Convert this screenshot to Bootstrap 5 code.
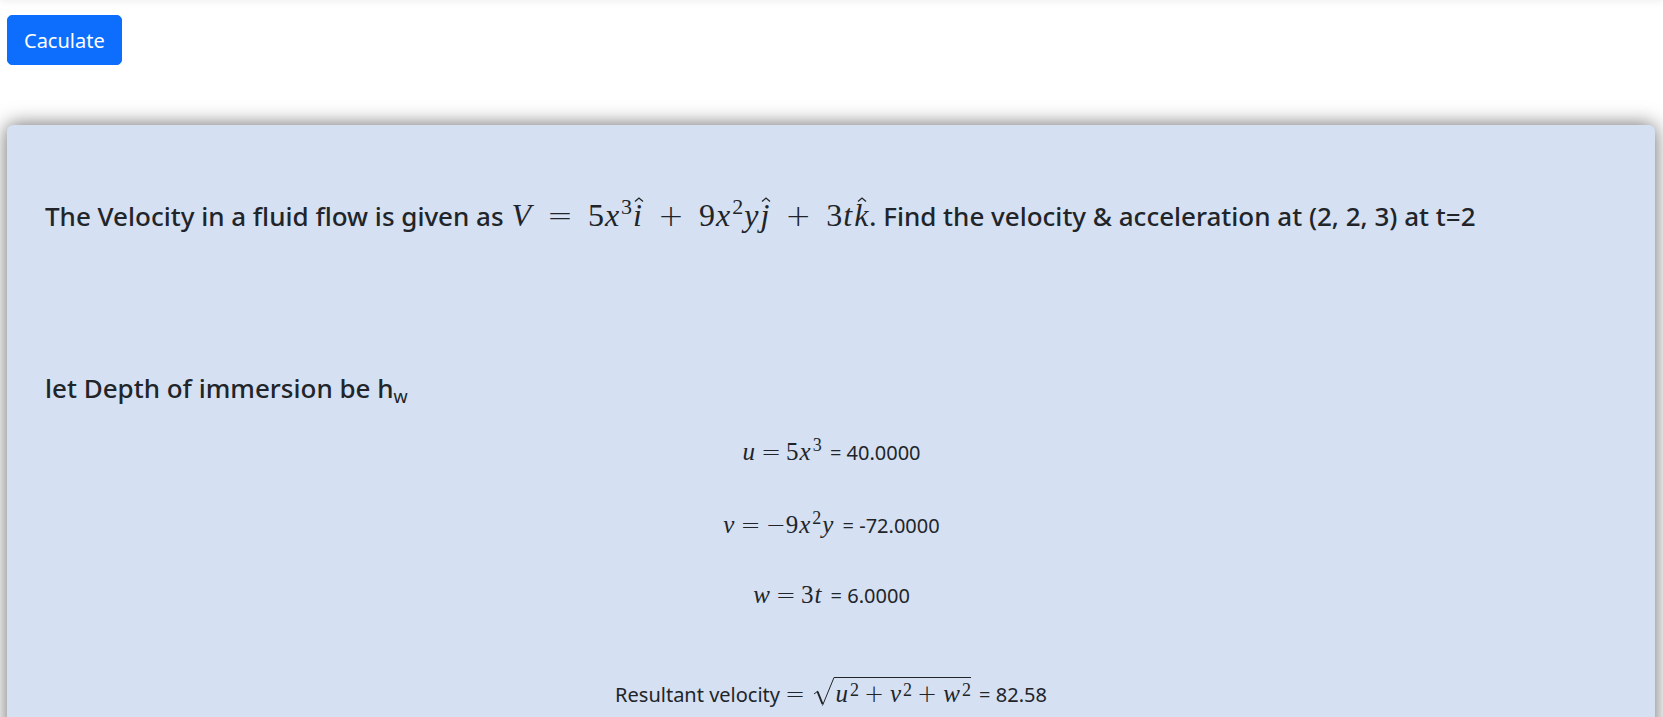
<!DOCTYPE html>
<html lang="en">
<head>
<meta charset="utf-8">
<meta name="viewport" content="width=device-width, initial-scale=1">
<title>Velocity and acceleration</title>
<link href="https://cdn.jsdelivr.net/npm/bootstrap@5.3.0/dist/css/bootstrap.min.css" rel="stylesheet">
<style>
body{font-family:"Noto Sans","Open Sans",sans-serif;font-size:20px;line-height:34px;overflow-x:hidden}
.page-top{height:6px;margin-top:-6px;box-shadow:0 0 8px rgba(0,0,0,.1)}
.page-body{padding:15px 8px 0 7px}
.calc-btn{font-size:20px;line-height:34px;padding:8px 16px 6px;border-radius:5px}
.solution{background:#d5e0f2;border-radius:6px;box-shadow:0 0 20px #666;margin-top:60px;padding:66px 38px 48px}
.solution h2{font-size:26px;line-height:50px;font-weight:500;margin:0}
.solution h2.assume{margin-top:122px;margin-bottom:23px}
.solution sub{font-size:18px;font-weight:400}
.step{margin:0 0 39px;text-align:center}
.step:nth-of-type(2){margin-bottom:36px}
.step.result{margin-top:65px}
.eq{font-family:"Liberation Serif",serif;font-size:25px;font-weight:400;line-height:1;white-space:nowrap}
.step .eq{margin-right:3px}
.eq i{margin:0 1px}
.eq sup{font-size:18px;line-height:0;top:-9px;vertical-align:baseline;margin-left:1px}
.eq b{font-family:"DejaVu Sans Light","DejaVu Sans",sans-serif;font-weight:200;margin:0 5px}
.step .eq b{font-size:24px}
.step .eq b.neg{margin:0}
h2 .eq{font-size:32px}
h2 .eq sup{font-size:22px;top:-12px}
h2 .eq b{font-size:31px;margin:0 15px}
.hat{position:relative;display:inline-block}
.hat svg{position:absolute;left:50%;top:-2px;width:10px;height:5px;margin-left:-4px}
.root{display:inline-flex;align-items:baseline;position:relative;padding-left:21px;margin-left:-3px}
.root svg{position:absolute;left:0;top:-3px;width:22px;height:30px}
.radicand{border-top:1px solid #212529;padding-top:3px;margin-top:-3px}
.radicand sup{top:-6px}
</style>
</head>
<body>
<div class="page-top"></div>
<main class="page-body">
<button type="button" class="btn btn-primary calc-btn">Caculate</button>
<section class="solution">
<h2>The Velocity in a fluid flow is given as <span class="eq"><i>V</i><b>=</b>5<i>x</i><sup>3</sup><span class="hat"><i>i</i><svg viewBox="0 0 10 5"><path d="M1 4.5L5 1L9 4.5" fill="none" stroke="#212529" stroke-width="1.3"/></svg></span><b>+</b>9<i>x</i><sup>2</sup><i>y</i><span class="hat"><i>j</i><svg viewBox="0 0 10 5"><path d="M1 4.5L5 1L9 4.5" fill="none" stroke="#212529" stroke-width="1.3"/></svg></span><b>+</b>3<i>t</i><span class="hat"><i>k</i><svg viewBox="0 0 10 5"><path d="M1 4.5L5 1L9 4.5" fill="none" stroke="#212529" stroke-width="1.3"/></svg></span></span>. Find the velocity &amp; acceleration at (2, 2, 3) at t=2</h2>
<h2 class="assume">let Depth of immersion be h<sub>w</sub></h2>
<p class="step"><span class="eq"><i>u</i><b>=</b>5<i>x</i><sup>3</sup></span> = 40.0000</p>
<p class="step"><span class="eq"><i>v</i><b>=</b><b class="neg">−</b>9<i>x</i><sup>2</sup><i>y</i></span> = -72.0000</p>
<p class="step"><span class="eq"><i>w</i><b>=</b>3<i>t</i></span> = 6.0000</p>
<p class="step result">Resultant velocity<span class="eq"><b>=</b> <span class="root"><svg viewBox="0 0 22 30"><path d="M1 17L5 14" fill="none" stroke="#212529" stroke-width="1"/><path d="M4.500 14.500L9.500 27" fill="none" stroke="#212529" stroke-width="2"/><path d="M9.500 28.500L21 .5H22" fill="none" stroke="#212529" stroke-width="1"/></svg><span class="radicand"><i>u</i><sup>2</sup><b>+</b><i>v</i><sup>2</sup><b>+</b><i>w</i><sup>2</sup></span></span></span> = 82.58</p>
</section>
</main>
<script src="https://cdn.jsdelivr.net/npm/bootstrap@5.3.0/dist/js/bootstrap.bundle.min.js"></script>
</body>
</html>
